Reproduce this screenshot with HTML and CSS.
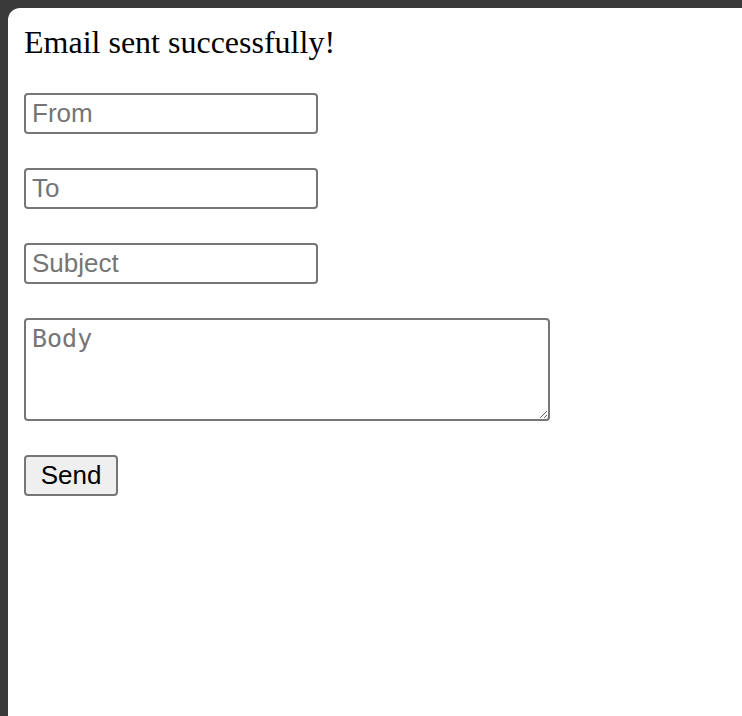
FILE: index.html
```html
<!DOCTYPE html>
<html lang="en">
<head>
<meta charset="utf-8">
<title>Email</title>
<link rel="stylesheet" href="styles.css">
</head>
<body>
<div class="frame">
  <main class="panel">
    <h1 class="status">Email sent successfully!</h1>
    <form class="mail-form">
      <input class="field" type="text" placeholder="From">
      <input class="field" type="text" placeholder="To">
      <input class="field" type="text" placeholder="Subject">
      <textarea class="body-field" placeholder="Body"></textarea>
      <div class="actions"><button class="send" type="button">Send</button></div>
    </form>
  </main>
</div>
</body>
</html>
```
FILE: styles.css
```css
html, body {
  margin: 0;
  height: 100%;
  background: #3a3a3a;
}
.frame {
  box-sizing: border-box;
  height: 100%;
  padding: 8px 0 0 8px;
  display: flex;
}
.panel {
  flex: 1;
  background: #ffffff;
  border-top-left-radius: 12px;
  padding: 17px 16px 16px 16px;
  display: flex;
  flex-direction: column;
  gap: 35px;
}
.status {
  margin: 0;
  font-family: "Liberation Serif", "Times New Roman", serif;
  font-weight: normal;
  font-size: 32px;
  line-height: 34px;
  margin-bottom: -1px;
}
.mail-form {
  margin: 0;
  display: flex;
  flex-direction: column;
  align-items: flex-start;
  gap: 34px;
}
.field {
  box-sizing: border-box;
  width: 294px;
  height: 41px;
  margin: 0;
  padding: 0 6px;
  border: 2px solid #767676;
  border-radius: 4px;
  font-family: "Liberation Sans", Arial, sans-serif;
  font-size: 26px;
  color: #000;
  background: #fff;
  outline: none;
}
.field::placeholder {
  color: #757575;
}
.body-field {
  box-sizing: border-box;
  width: 526px;
  height: 103px;
  margin: 0;
  padding: 4px 6px;
  border: 2px solid #767676;
  border-radius: 4px;
  font-family: "DejaVu Sans Mono", monospace;
  font-size: 25px;
  line-height: 29px;
  color: #000;
  background: #fff;
  outline: none;
  display: block;
}
.body-field::placeholder {
  color: #757575;
}
.actions {
  display: flex;
}
.send {
  box-sizing: border-box;
  width: 94px;
  height: 41px;
  margin: 0;
  padding: 0;
  border: 2px solid #767676;
  border-radius: 4px;
  background: #efefef;
  font-family: "Liberation Sans", Arial, sans-serif;
  font-size: 26px;
  color: #000;
}
```
